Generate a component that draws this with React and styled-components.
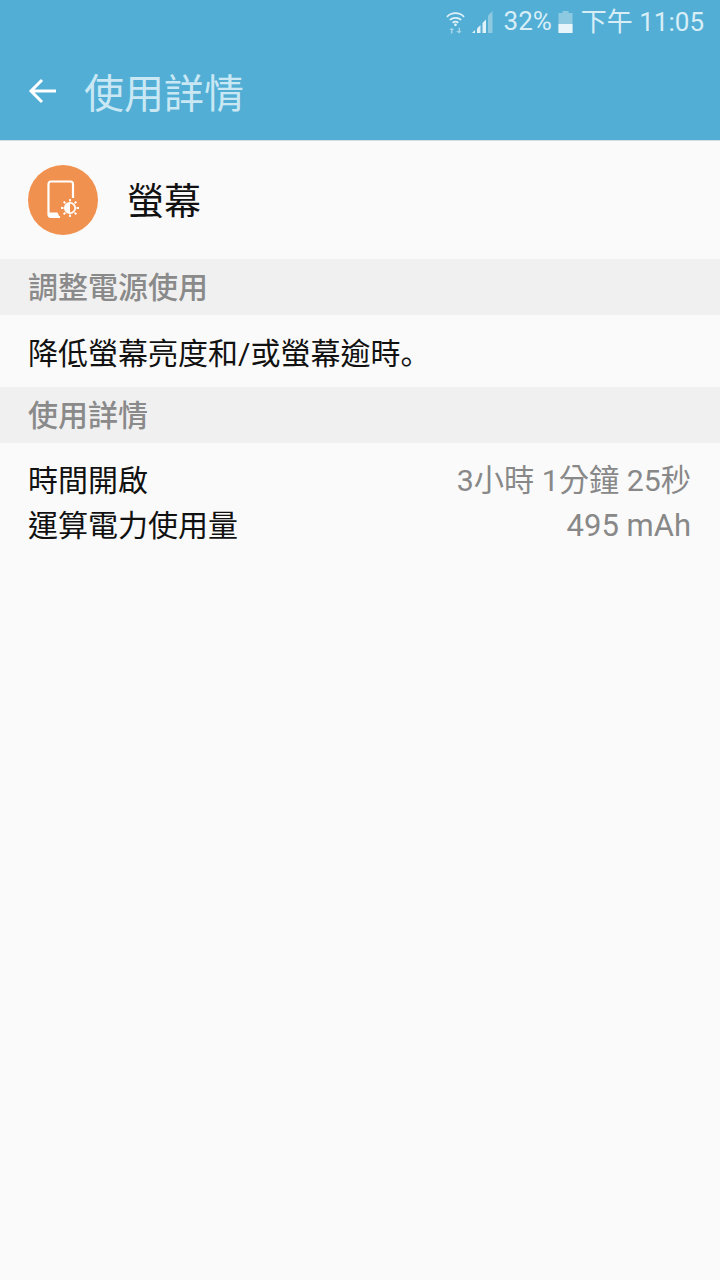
import React from "react";
import styled, { createGlobalStyle } from "styled-components";

const GlobalStyle = createGlobalStyle`
	html, body {
		margin: 0;
		padding: 0;
		background: #fafafa;
	}
	* {
		box-sizing: border-box;
	}
`;

const FONT = `Roboto, "Noto Sans CJK TC", sans-serif`;

const App = () => {
	return (
		<Page>
			<GlobalStyle />
			<Header>
				<StatusBar>
					<svg width="19" height="24" viewBox="0 0 20 24">
						<g fill="none" stroke="#e2f2f9" strokeWidth="1.8">
							<path d="M1 6.500C6 1.500 14 1.500 19 6.500" />
							<path d="M4 9.800C7.500 6.800 12.500 6.800 16 9.800" />
							<path d="M7 12.800C8.800 11.500 11.200 11.500 13 12.800" />
						</g>
						<circle cx="10" cy="15" r="1.400" fill="#e2f2f9" />
						<path d="M6 18l-2.500 2.500h1.700V24h1.600V20.500H8.500z" fill="#a5d5e9" />
						<path d="M14 24l2.500 -2.500h-1.700V18h-1.600V21.500H10.500z" fill="#a5d5e9" />
					</svg>
					<SignalIcon width="21" height="24" viewBox="0 0 21 24">
						<path d="M0 23h3v-3z" fill="#e2f2f9" />
						<path d="M5 23h3.500v-8l-3.500 3.500z" fill="#e2f2f9" />
						<path d="M10.500 23h3.500v-13.500l-3.500 3.500z" fill="#e2f2f9" />
						<path d="M16 23h4.500v-22l-4.500 4.500z" fill="#8ec9e2" />
					</SignalIcon>
					<Percent>32%</Percent>
					<BatteryIcon width="15" height="22" viewBox="0 0 15 22">
						<path d="M4.500 0h6v2h4v20h-14v-20h4z" fill="#8ec9e2" />
						<rect x="0.500" y="13" width="14" height="9" fill="#e8f5fa" />
					</BatteryIcon>
					<Clock>下午 11:05</Clock>
				</StatusBar>
				<TitleBar>
					<svg width="30" height="30" viewBox="0 0 30 30">
						<path d="M29 15H4M15 4L4 15l11 11" fill="none" stroke="#ffffff" strokeWidth="3" />
					</svg>
					<Title>使用詳情</Title>
				</TitleBar>
			</Header>
			<AppRow>
				<AppIcon>
					<svg width="40" height="40" viewBox="0 0 40 40">
						<path d="M17 37H8C6.300 37 5.500 36 5.500 34.500V4C5.500 2.500 6.300 1.500 8 1.500H27.500C29 1.500 30 2.500 30 4V18" fill="none" stroke="#ffffff" strokeWidth="2.200" />
						<path d="M5.500 32.500H14.500L17 38H8C6.300 38 5.500 36.500 5.500 35z" fill="#ffffff" />
						<g stroke="#ffffff" strokeWidth="1.800">
							<path d="M27 19v2.500M27 34.500v2.500M18 28h2.500M33.500 28h2.500M20.600 21.600l1.800 1.800M31.600 32.600l1.800 1.800M20.600 34.400l1.800 -1.800M31.600 23.400l1.800 -1.800" />
						</g>
						<circle cx="27" cy="28" r="5.200" fill="none" stroke="#ffffff" strokeWidth="1.700" />
						<path d="M27 23a5 5 0 0 0 0 10z" fill="#ffffff" />
					</svg>
				</AppIcon>
				<AppName>螢幕</AppName>
			</AppRow>
			<SectionHead>調整電源使用</SectionHead>
			<Advice>降低螢幕亮度和/或螢幕逾時<Period>。</Period></Advice>
			<SectionHead>使用詳情</SectionHead>
			<Details>
				<DetailRow>
					<span>時間開啟</span>
					<DetailValue $size={30.25}>3小時 1分鐘 25秒</DetailValue>
				</DetailRow>
				<DetailRow>
					<span>運算電力使用量</span>
					<DetailValue $size={31}>495 mAh</DetailValue>
				</DetailRow>
			</Details>
		</Page>
	);
};

export default App;

const Page = styled.div`
	width: 720px;
	height: 1280px;
	overflow: hidden;
	background: #fafafa;
	font-family: ${FONT};
`;

const Header = styled.div`
	height: 141px;
	background: #52aed5;
	border-bottom: 1px solid #d5dde0;
`;

const StatusBar = styled.div`
	height: 44px;
	display: flex;
	align-items: center;
	justify-content: flex-end;
	padding-right: 16px;
	color: #d8eef7;
`;

const SignalIcon = styled.svg`
	margin-left: 7px;
`;

const BatteryIcon = styled.svg`
	margin-left: 6px;
`;

const Percent = styled.span`
	font-size: 26px;
	margin: 0 0 2px 11px;
`;

const Clock = styled.span`
	font-size: 26px;
	margin: 0 0 6px 8px;
`;

const TitleBar = styled.div`
	height: 96px;
	display: flex;
	align-items: center;
	padding: 0 0 2px 27px;
`;

const Title = styled.div`
	font-size: 40px;
	color: #c9e8f4;
	margin-left: 27px;
`;

const AppRow = styled.div`
	height: 118px;
	display: flex;
	align-items: center;
	padding-left: 28px;
`;

const AppIcon = styled.div`
	width: 70px;
	height: 70px;
	border-radius: 50%;
	background: #f19150;
	display: flex;
	align-items: center;
	justify-content: center;
`;

const AppName = styled.div`
	font-size: 37px;
	color: #111;
	margin-left: 29px;
	padding-bottom: 2px;
`;

const SectionHead = styled.div`
	height: 56px;
	background: #f0f0f0;
	display: flex;
	align-items: center;
	padding: 0 0 4px 28px;
	font-size: 30px;
	font-weight: 500;
	color: #8a8a8a;
`;

const Advice = styled.div`
	height: 72px;
	display: flex;
	align-items: center;
	padding-left: 28px;
	font-size: 30px;
	color: #111;
`;

const Period = styled.span`
	font-family: "Noto Sans CJK JP", sans-serif;
`;

const Details = styled.div`
	padding: 13px 29px 0 28px;
`;

const DetailRow = styled.div`
	height: 44.500px;
	display: flex;
	align-items: baseline;
	justify-content: space-between;
	font-size: 30px;
	color: #111;
`;

const DetailValue = styled.span`
	font-size: ${props => props.$size}px;
	color: #888;
`;
